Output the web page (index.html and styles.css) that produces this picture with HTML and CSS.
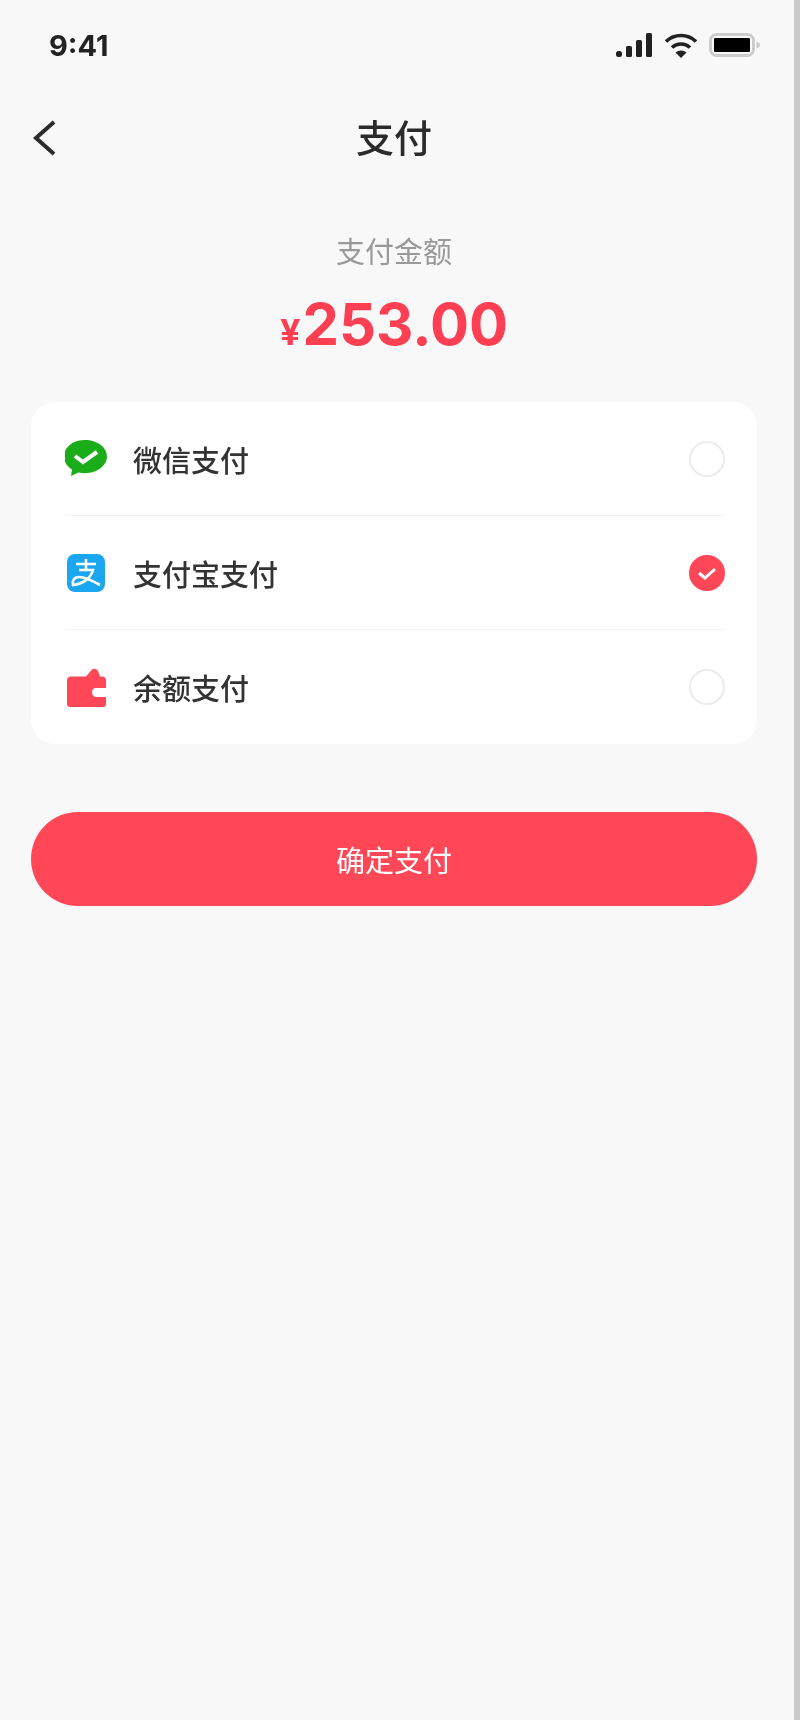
FILE: index.html
```html
<!DOCTYPE html>
<html lang="zh-CN">
<head>
  <meta charset="UTF-8">
  <meta name="viewport" content="width=device-width, initial-scale=1.0">
  <title>支付</title>
  <link rel="stylesheet" href="styles.css">
</head>
<body>

<div class="screen">
  <div class="statusbar">
    <span class="time">9:41</span>
    <div class="status-icons">
      <svg width="38" height="26" viewBox="0 0 38 26">
        <rect x="1" y="19" width="6" height="6" rx="2.500" fill="#222"/>
        <rect x="11" y="14" width="6" height="11" rx="1.500" fill="#222"/>
        <rect x="21" y="8" width="6" height="17" rx="1.500" fill="#222"/>
        <rect x="31" y="1" width="6" height="24" rx="1.500" fill="#222"/>
      </svg>
      <svg width="34" height="26" viewBox="0 0 34 26">
        <path d="M2 9.500C10.500 1.500 23.500 1.500 32 9.500" fill="none" stroke="#222" stroke-width="3.600"/>
        <path d="M8 15.500C13 10.800 21 10.800 26 15.500" fill="none" stroke="#222" stroke-width="3.600"/>
        <path d="M17 26L11.500 20.500C14.500 17.800 19.500 17.800 22.500 20.500Z" fill="#222"/>
      </svg>
      <svg width="52" height="26" viewBox="0 0 52 26">
        <rect x="1.500" y="2.500" width="43" height="21" rx="6" fill="none" stroke="#ccc" stroke-width="3"/>
        <rect x="5" y="6" width="36" height="14" rx="1" fill="#000"/>
        <path d="M47.500 9.500C50 10.500 51 11.500 51 13C51 14.500 50 15.500 47.500 16.500Z" fill="#ccc"/>
      </svg>
    </div>
  </div>

  <div class="navbar">
    <svg class="back" width="26" height="38" viewBox="0 0 26 38">
      <path d="M23 3L5 19L23 35" fill="none" stroke="#2b2b2b" stroke-width="4"/>
    </svg>
    <h1>支付</h1>
  </div>

  <div class="amount">
    <p class="amount-label">支付金额</p>
    <p class="amount-value"><span class="currency">¥</span>253.00</p>
  </div>

  <div class="card">
    <div class="row">
      <svg class="pay-icon" width="44" height="40" viewBox="2 0 44 40">
        <path d="M22 1C10 1 1 8 1 17.500C1 23 4 27.500 9 30.500L8 37L15.500 33.500C18 34 20 34.200 22 34.200C34 34.200 44 26.500 44 17.500C44 8 34 1 22 1Z" fill="#1aad19"/>
        <path d="M12 17L20 23L34 13" fill="none" stroke="#fff" stroke-width="4"/>
      </svg>
      <span class="row-name">微信支付</span>
      <span class="radio"></span>
    </div>
    <div class="row">
      <svg class="pay-icon" width="44" height="40" viewBox="1 0 44 40">
        <rect x="3" y="1" width="38" height="38" rx="8" fill="#1aa7f0"/>
        <path d="M12 11H32M22 6V17M15 17H29C27 25 19 31 9 32C8 28 10 24 15 24C21 24 29 28 36 32" fill="none" stroke="#fff" stroke-width="2.600"/>
      </svg>
      <span class="row-name">支付宝支付</span>
      <span class="radio radio-on">
        <svg width="36" height="36" viewBox="0 0 36 36">
          <path d="M10 18L16 23L26 14" fill="none" stroke="#fff" stroke-width="3"/>
        </svg>
      </span>
    </div>
    <div class="row">
      <svg class="pay-icon" width="44" height="40" viewBox="0 0 44 40">
        <path d="M2 13C2 11 4 9.500 6 9.500H21L27 2.500C29 1 32 2 33 4L35 9.500H37C39 9.500 41 11 41 13V21H31C28 21 27 23 27 25.500C27 28 29 30 31 30H41V37C41 39 40 40 38 40H5C3 40 2 39 2 37Z" fill="#ff4757"/>
      </svg>
      <span class="row-name">余额支付</span>
      <span class="radio"></span>
    </div>
  </div>

  <button class="pay-button">确定支付</button>
</div>

</body>
</html>
```

FILE: styles.css
```css
html, body {
  margin: 0;
  height: 100%;
}
body {
  background: #f8f8f8;
  border-right: 6px solid #c9c9c9;
  box-sizing: border-box;
  font-family: "Noto Sans CJK SC", "Noto Sans", sans-serif;
  color: #2b2b2b;
}
p, h1 {
  margin: 0;
}
/* the reference is a soft, upscaled capture */
.screen {
  padding: 0 37px 0 31px;
  filter: blur(0.6px);
}
/* Status bar */
.statusbar {
  display: flex;
  justify-content: space-between;
  align-items: center;
  height: 90px;
  margin-right: -6px;
  padding: 0 2px 0 18px;
}
.time {
  font-family: Inter, sans-serif;
  font-size: 29px;
  font-weight: 700;
  color: #222;
}
.status-icons {
  display: flex;
  align-items: center;
  gap: 11px;
}
/* Navigation */
.navbar {
  position: relative;
  display: flex;
  justify-content: center;
  align-items: center;
  height: 92px;
  padding-bottom: 4px;
}
.navbar h1 {
  font-size: 38px;
  font-weight: 500;
  line-height: 1;
}
.back {
  position: absolute;
  left: 0;
  top: 29px;
}
/* Amount */
.amount {
  text-align: center;
  padding-top: 44px;
}
.amount-label {
  font-size: 29px;
  line-height: 40px;
  color: #999;
}
.amount-value {
  margin-top: 16px;
  font-family: Inter, sans-serif;
  font-size: 58px;
  font-weight: 700;
  line-height: 76px;
  color: #fd3f53;
}
.currency {
  font-size: 36px;
  margin-right: 2px;
}
/* Payment methods */
.card {
  margin-top: 32px;
  background: #fff;
  border-radius: 24px;
  padding: 0 32px 0 34px;
}
.row {
  display: flex;
  align-items: center;
  box-sizing: border-box;
  height: 114px;
  border-bottom: 1px solid #f3f3f3;
}
.row:last-child {
  border-bottom: 0;
}
.pay-icon {
  margin-right: 24px;
}
.row-name {
  flex: 1;
  font-size: 29px;
  font-weight: 500;
  color: #333;
}
.radio {
  width: 32px;
  height: 32px;
  border: 2px solid #ececec;
  border-radius: 50%;
}
.radio-on {
  border-color: #ff4757;
  background: #ff4757;
}
.radio-on svg {
  display: block;
  margin: -2px;
}
/* Confirm */
.pay-button {
  display: block;
  width: 100%;
  height: 94px;
  margin-top: 68px;
  border: 0;
  border-radius: 47px;
  background: #ff4757;
  color: #fff;
  font-family: "Noto Sans CJK SC", sans-serif;
  font-size: 29px;
}
```
